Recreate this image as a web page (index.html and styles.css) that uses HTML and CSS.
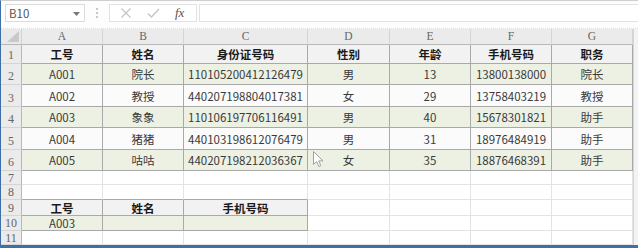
FILE: index.html
```html
<!DOCTYPE html>
<html lang="zh">
<head>
<meta charset="utf-8">
<link rel="stylesheet" href="styles.css">
</head>
<body>
<div class="app">
  <div class="toolbar">
    <div class="namebox"><span>B10</span><svg class="dd" width="7" height="4" viewBox="0 0 7 4"><path d="M0 0H7L3.5 4Z" fill="#777"/></svg></div>
    <div class="sep"><i></i><i></i><i></i></div>
    <div class="fbtns">
      <svg width="12" height="12" viewBox="0 0 12 12"><path d="M1.5 1.5L10.5 10.5M10.5 1.5L1.5 10.5" stroke="#c4c4c4" stroke-width="1.2"/></svg>
      <svg width="13" height="12" viewBox="0 0 13 12"><path d="M1 6.5L4.5 10L12 2" stroke="#c4c4c4" stroke-width="1.3" fill="none"/></svg>
      <span class="fx">fx</span>
    </div>
    <div class="finput"></div>
  </div>
  <div class="sheet">
    <div class="grid">
      <div class="corner"><svg width="12" height="11" viewBox="0 0 12 11"><path d="M12 0V11H0Z" fill="#c9c9c9"/></svg></div>
      <div class="ch">A</div><div class="ch">B</div><div class="ch">C</div><div class="ch">D</div><div class="ch">E</div><div class="ch">F</div><div class="ch">G</div>

      <div class="rh r1">1</div>
      <div class="c t th">工号</div><div class="c t th">姓名</div><div class="c t th">身份证号码</div><div class="c t th">性别</div><div class="c t th">年龄</div><div class="c t th">手机号码</div><div class="c t th">职务</div>

      <div class="rh">2</div>
      <div class="c t g">A001</div><div class="c t g">院长</div><div class="c t g">110105200412126479</div><div class="c t g">男</div><div class="c t g">13</div><div class="c t g">13800138000</div><div class="c t g">院长</div>

      <div class="rh">3</div>
      <div class="c t w">A002</div><div class="c t w">教授</div><div class="c t w">440207198804017381</div><div class="c t w">女</div><div class="c t w">29</div><div class="c t w">13758403219</div><div class="c t w">教授</div>

      <div class="rh">4</div>
      <div class="c t g">A003</div><div class="c t g">象象</div><div class="c t g">110106197706116491</div><div class="c t g">男</div><div class="c t g">40</div><div class="c t g">15678301821</div><div class="c t g">助手</div>

      <div class="rh">5</div>
      <div class="c t w">A004</div><div class="c t w">猪猪</div><div class="c t w">440103198612076479</div><div class="c t w">男</div><div class="c t w">31</div><div class="c t w">18976484919</div><div class="c t w">助手</div>

      <div class="rh">6</div>
      <div class="c t g">A005</div><div class="c t g">咕咕</div><div class="c t g">440207198212036367</div><div class="c t g">女</div><div class="c t g">35</div><div class="c t g">18876468391</div><div class="c t g">助手</div>

      <div class="rh sm">7</div>
      <div class="c"></div><div class="c"></div><div class="c"></div><div class="c"></div><div class="c"></div><div class="c"></div><div class="c"></div>

      <div class="rh sm">8</div>
      <div class="c bb"></div><div class="c bb"></div><div class="c bb"></div><div class="c"></div><div class="c"></div><div class="c"></div><div class="c"></div>

      <div class="rh sm">9</div>
      <div class="c t th">工号</div><div class="c t th">姓名</div><div class="c t th">手机号码</div><div class="c bl"></div><div class="c"></div><div class="c"></div><div class="c"></div>

      <div class="rh sm">10</div>
      <div class="c t g">A003</div><div class="c t g"></div><div class="c t g"></div><div class="c"></div><div class="c"></div><div class="c"></div><div class="c"></div>

      <div class="rh sm">11</div>
      <div class="c"></div><div class="c"></div><div class="c"></div><div class="c"></div><div class="c"></div><div class="c"></div><div class="c"></div>
    </div>
    <div class="gutter"></div>
    <svg class="cursor" width="12" height="17" viewBox="0 0 12 17"><path d="M0.5 0.5V13.5L3.6 10.6L5.8 15.6L7.8 14.7L5.7 9.9H10Z" fill="#fff" stroke="#a0a0a0" stroke-width="1"/></svg>
  </div>
</div>
</body>
</html>
```

FILE: styles.css
```css
* { box-sizing: border-box; }
html, body { margin: 0; padding: 0; }
body {
  width: 638px;
  height: 248px;
  background: #ffffff;
  font-family: "Noto Sans CJK SC", "Open Sans", sans-serif;
  overflow: hidden;
}
.app {
  width: 638px;
  height: 248px;
  border-left: 1px solid #3f6fa8;
  border-top: 1px solid #cfcfcf;
  border-bottom: 3px solid #3f6fa8;
  display: flex;
  flex-direction: column;
}
.toolbar {
  height: 28px;
  display: flex;
  align-items: flex-start;
  padding: 3px 0 0 4px;
  background: #fdfdfd;
  border-bottom: 1px dotted #dedede;
}
.namebox {
  width: 80px;
  height: 18px;
  border: 1px solid #dcdcdc;
  background: #fff;
  display: flex;
  align-items: center;
  justify-content: space-between;
  padding: 0 4px 0 3px;
  font-size: 11.5px;
  color: #555;
}
.namebox span { line-height: 16px; }
.dd { margin-top: 1px; }
.sep {
  width: 24px;
  height: 18px;
  display: flex;
  flex-direction: column;
  align-items: center;
  justify-content: center;
  gap: 2px;
}
.sep i {
  display: block;
  width: 2px;
  height: 2px;
  background: #c8c8c8;
}
.fbtns {
  width: 88px;
  height: 18px;
  border: 1px solid #e2e2e2;
  background: #fff;
  display: flex;
  align-items: center;
  padding-left: 10px;
  gap: 15px;
}
.fx {
  font-family: "Liberation Serif", serif;
  font-style: italic;
  font-size: 13px;
  color: #555;
  line-height: 16px;
}
.finput {
  margin-left: 2px;
  flex: 1;
  height: 18px;
  border: 1px solid #e2e2e2;
  border-right: none;
  background: #fff;
}
.sheet {
  flex: 1;
  display: flex;
  position: relative;
}
.grid {
  display: grid;
  grid-template-columns: 21px 81px 81px 124px 82px 81px 81px 81px;
  grid-template-rows: 16px 19px 21px 22px 21px 22px 21px 14px 15px 16px 15px 14px;
}
.gutter {
  flex: 1;
  background: #f3f3f3;
  border-left: 1px solid #d6d6d6;
}
.corner {
  background: #e9e9e9;
  border-right: 1px solid #d2d2d2;
  border-bottom: 1px solid #b8b8b8;
  display: flex;
  align-items: flex-end;
  justify-content: flex-end;
  padding: 0 2px 2px 0;
}
.ch {
  background: #ebebeb;
  border-right: 1px solid #d4d4d4;
  border-bottom: 1px solid #b8b8b8;
  font-family: "Liberation Serif", serif;
  font-size: 11.5px;
  color: #666;
  text-align: center;
  line-height: 15px;
}
.rh {
  background: #ebebeb;
  border-right: 1px solid #b8b8b8;
  border-bottom: 1px solid #d4d4d4;
  font-family: "Liberation Serif", serif;
  font-size: 12px;
  color: #666;
  display: flex;
  align-items: flex-end;
  justify-content: center;
  padding-bottom: 1px;
  line-height: 14px;
}
.rh.sm { align-items: center; padding-bottom: 0; }
.c {
  border-right: 1px solid #e3e3e3;
  border-bottom: 1px solid #e3e3e3;
  font-size: 11.5px;
  color: #3a3a3a;
  text-align: center;
  display: flex;
  align-items: center;
  justify-content: center;
  white-space: nowrap;
}
.c.t {
  border-right-color: #a9a9a9;
  border-bottom-color: #a9a9a9;
}
.c.bb { border-bottom-color: #a9a9a9; }
.th {
  background: #f2f2f2;
  font-weight: bold;
  color: #1a1a1a;
}
.g { background: #edf1e3; }
.w { background: #fbfbfb; }
.cursor {
  position: absolute;
  left: 312px;
  top: 122px;
}
```
